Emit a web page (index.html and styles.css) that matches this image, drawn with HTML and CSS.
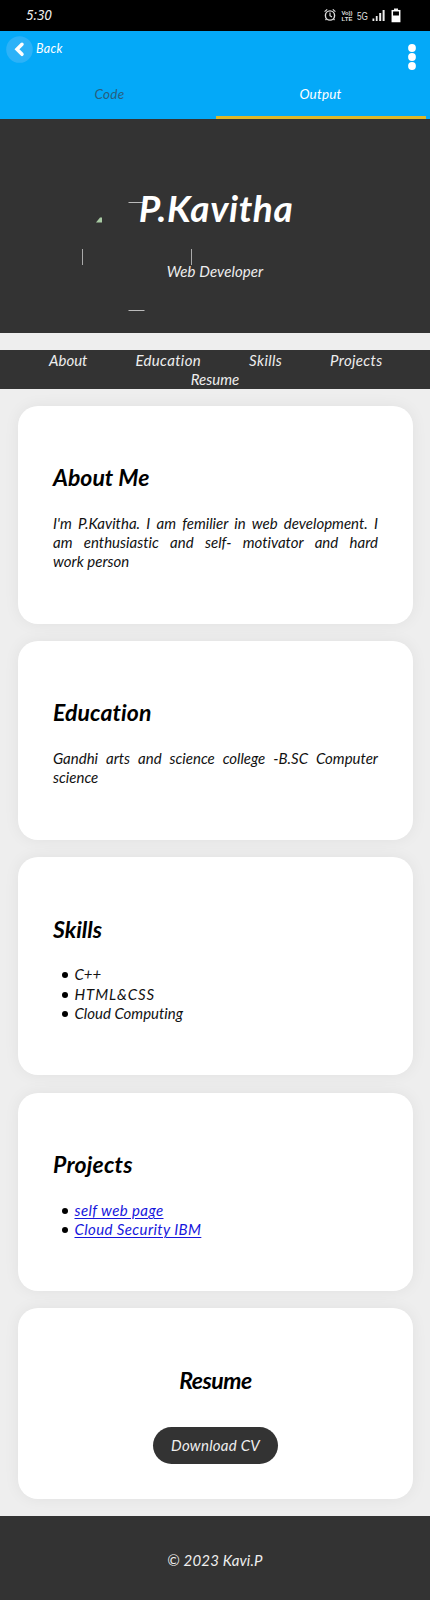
FILE: index.html
```html
<!DOCTYPE html>
<html lang="en">
<head>
<meta charset="utf-8">
<title>P.Kavitha</title>
<link rel="stylesheet" href="styles.css">
</head>
<body>
<div class="status">
  <span class="clock">5:30</span>
  <svg class="status-icons" width="78" height="18" viewBox="0 0 78 18" fill="none" stroke="#ddd">
    <circle cx="7" cy="9.5" r="4.6" stroke-width="1.4"/>
    <path d="M7 6.5v3.2l2 1.2M1.6 5.6l2.6-2.2M12.4 5.6L9.8 3.400M3.500 13l-1 1M10.500 13l1 1" stroke-width="1.2"/>
    <g fill="#ddd" stroke="none" class="net-small"><text x="18.500" y="8.800" textLength="11">Vo))</text><text x="18.500" y="14.800" textLength="11">LTE</text></g>
    <text class="net" x="34" y="13.800" textLength="11" lengthAdjust="spacingAndGlyphs" fill="#ddd" stroke="none">5G</text>
    <g fill="#eee" stroke="none"><rect x="49.500" y="12.500" width="1.800" height="2.500"/><rect x="52.800" y="10" width="1.800" height="5"/><rect x="56.200" y="7" width="2" height="8"/><rect x="59.600" y="4" width="2" height="11"/><rect x="71" y="2.500" width="4" height="2"/></g>
    <rect x="69.300" y="4.700" width="7.400" height="10.800" stroke="#fff" stroke-width="1.500"/>
    <path d="M70 9.500h6v5.500h-6z" fill="#fff" stroke="none"/>
  </svg>
</div>
<div class="appbar">
  <div class="toolbar">
    <svg width="27" height="27" viewBox="0 0 27 27"><circle cx="13.500" cy="13.500" r="13.300" fill="#2cb2f8"/><path d="M16 8.300L11 13.300l5 5" fill="none" stroke="#fff" stroke-width="3.500" stroke-linecap="round"/></svg>
    <span class="back">Back</span>
    <svg class="more" width="8" height="28" viewBox="0 0 8 28" fill="#fff"><circle cx="4" cy="5" r="3.900"/><circle cx="4" cy="14" r="3.900"/><circle cx="4" cy="23" r="3.900"/></svg>
  </div>
  <div class="tabs">
    <span class="tab tab-code">Code</span>
    <span class="tab tab-output">Output</span>
  </div>
</div>
<header class="hero">
  <svg class="frame" width="120" height="120" viewBox="0 0 120 120">
    <path d="M50.500 11.500h16M50.500 119.500h16" stroke="#bbb"/>
    <path d="M4.500 58v16M113.500 58v16" stroke="#aaa"/>
    <path d="M18 31.500h6v-5h-2z" fill="#a9cba4"/>
  </svg>
  <h1>P.Kavitha</h1>
  <p class="role">Web Developer</p>
</header>
<nav class="nav">
  <div class="nav-row"><a>About</a><a class="wide">Education</a><a class="wide">Skills</a><a class="wide">Projects</a></div>
  <div class="nav-row nav-last"><a>Resume</a></div>
</nav>
<main class="cards">
  <section class="card about"><h2>About Me</h2><p><span class="full">I'm P.Kavitha. I am femilier in web development. I </span><span class="full">am enthusiastic and self- motivator and hard </span>work person</p></section>
  <section class="card education"><h2>Education</h2><p><span class="full">Gandhi arts and science college -B.SC Computer </span>science</p></section>
  <section class="card skills"><h2>Skills</h2><ul><li>C++</li><li class="html">HTML&amp;CSS</li><li>Cloud Computing</li></ul></section>
  <section class="card projects"><h2>Projects</h2><ul><li><a>self web page</a></li><li><a>Cloud Security IBM</a></li></ul></section>
  <section class="card resume"><h2>Resume</h2><a class="download">Download CV</a></section>
</main>
<footer class="footer">© 2023 Kavi.P</footer>
</body>
</html>
```
FILE: styles.css
```css
* { box-sizing: border-box; }
body { margin: 0; width: 430px; height: 1600px; overflow: hidden; background: #eee; color: #111; font: italic 15px/19.3px Lato, sans-serif; font-variant-ligatures: none; display: flex; flex-direction: column; }
h1, h2, p, ul { margin: 0; padding: 0; }
.status { height: 30.5px; flex: none; background: #000; color: #eee; display: flex; justify-content: space-between; padding: 6px 29px 0 26px; }
.clock { font: italic 13.5px/19px "Noto Sans", sans-serif; }
.net-small { font: bold 6px "Liberation Sans", sans-serif; }
.net { font: 11.5px "Liberation Sans", sans-serif; }
.appbar { height: 88.5px; flex: none; background: #04a9f8; color: #fff; }
.toolbar { display: flex; padding: 5.5px 14px 0 6px; height: 54px; }
.back { font-size: 12.5px; line-height: 15px; margin: 5px 0 0 3px; letter-spacing: .3px; }
.more { margin: 7px 0 0 auto; }
.tabs { display: flex; height: 34.5px; padding-right: 4px; }
.tab { font-size: 13.5px; line-height: 19px; height: 34.5px; text-align: center; }
.tab-code { flex: 0 0 216px; padding-left: 3px; color: #28607e; letter-spacing: .3px; }
.tab-output { flex: 1; padding-right: 1px; letter-spacing: .2px; border-bottom: 3.5px solid #dfb728; }
.hero { position: relative; height: 213.5px; flex: none; background: #333; color: #fff; padding-top: 66px; text-align: center; }
.frame { position: absolute; left: 78px; top: 72px; height: 120px; overflow: visible; }
h1 { position: relative; font-size: 37px; line-height: 46px; font-weight: bold; letter-spacing: .6px; padding-left: 2px; }
.role { position: relative; margin-top: 30.5px; color: #eee; letter-spacing: .1px; }
.nav { margin-top: 17.5px; height: 38.5px; flex: none; background: #333; color: #eee; padding-top: .5px; }
.nav-row { display: flex; justify-content: space-between; padding: 0 47.5px 0 49px; line-height: 19px; }
.wide { letter-spacing: .35px; }
.nav-last { justify-content: center; padding: 0; }
.cards { display: flex; flex-direction: column; gap: 17.3px; padding: 17.2px 17px 0 17.5px; flex: none; }
.card { background: #fff; border-radius: 20px; box-shadow: 0 0 16px rgba(0,0,0,.06); padding: 57.3px 35px 0 35.5px; }
.about, .skills { height: 218px; }
.education { height: 199px; }
.projects { height: 198.5px; }
.resume { height: 190.5px; text-align: center; }
h2 { color: #000; font-size: 23px; line-height: 28px; margin-bottom: 22.7px; }
.education h2 { letter-spacing: .1px; }
.projects h2 { letter-spacing: .2px; }
.resume h2 { letter-spacing: -.5px; }
.full { display: block; text-align: justify; text-align-last: justify; }
ul { list-style: none; }
li { padding-left: 21.5px; display: flex; align-items: center; }
li::before { content: ""; width: 6px; height: 6px; border-radius: 50%; background: #000; margin: 1px 6.5px 0 -12.5px; }
.html { letter-spacing: .9px; }
li a { color: #1616dc; text-decoration: underline; text-decoration-thickness: 1px; text-underline-offset: 2px; letter-spacing: .4px; }
.download { display: inline-block; margin-top: 10.7px; width: 124.5px; height: 36.5px; border-radius: 19px; line-height: 36.5px; background: #333; color: #eee; letter-spacing: .25px; }
.footer { margin-top: 17.2px; flex: 1; background: #333; color: #eee; text-align: center; padding-top: 35.3px; letter-spacing: .15px; }
```
